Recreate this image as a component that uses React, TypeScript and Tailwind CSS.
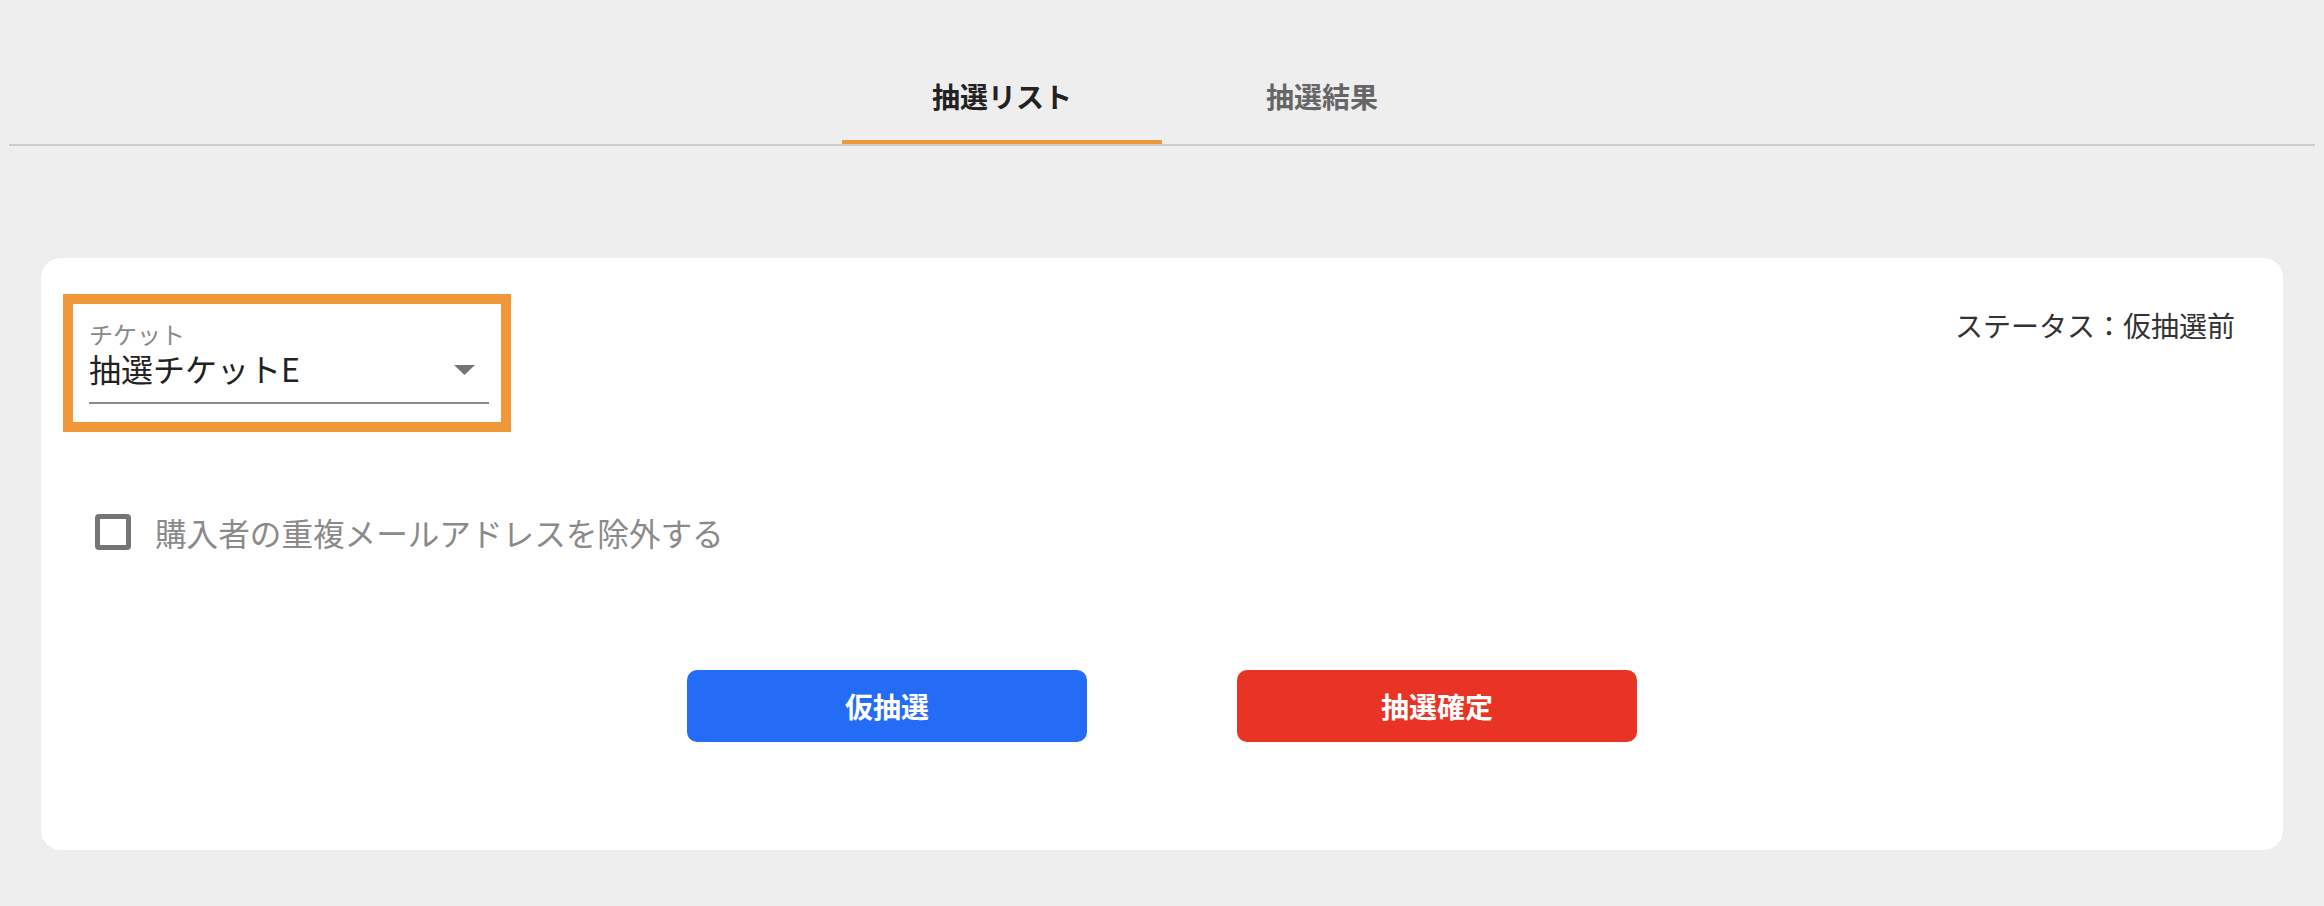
import { useState } from 'react';

const tabs = ['抽選リスト', '抽選結果'];

export default function App() {
  const [activeTab, setActiveTab] = useState(0);
  const [excludeDuplicates, setExcludeDuplicates] = useState(false);

  return (
    <div className="min-h-[906px] bg-[#eeeeee] pt-[48px] font-['Noto_Sans_CJK_JP','Noto_Sans',sans-serif]">
      {/* Tabs */}
      <div className="mx-[9px] flex justify-center border-b-2 border-[#cccccc]">
        {tabs.map((tab, idx) => (
          <button
            key={tab}
            onClick={() => setActiveTab(idx)}
            className={`relative flex h-[96px] w-[320px] items-center justify-center text-[28px] font-bold leading-[40px] ${
              activeTab === idx ? 'text-[#222222]' : 'text-[#666666]'
            }`}
          >
            {tab}
            {activeTab === idx && (
              <span className="absolute bottom-0 left-0 right-0 h-[4px] bg-[#f0973a]" />
            )}
          </button>
        ))}
      </div>

      {/* Card */}
      <div className="mx-[41px] mt-[112px] h-[592px] rounded-[20px] bg-white px-[22px] pt-[36px]">
        <div className="flex items-start justify-between">
          {/* Ticket select */}
          <div className="h-[138px] w-[448px] border-[10px] border-[#f0973a] pl-[16px] pr-[12px] pt-[17px]">
            <div className="text-[24px] leading-[26px] text-[#8a8a8a]">チケット</div>
            <div className="mt-[4px] flex items-center justify-between">
              <span className="text-[32px] leading-[34px] text-[#222222]">抽選チケットE</span>
              <svg width="21" height="10" viewBox="0 0 21 10" className="mr-[14px] mt-[4px]">
                <path d="M0 0 L21 0 L10.5 10 Z" fill="#757575" />
              </svg>
            </div>
            <div className="mt-[17px] h-[2px] bg-[#8c8c8c]" />
          </div>

          {/* Status */}
          <div className="mr-[26px] mt-[11px] text-[28px] leading-[40px] text-[#333333]">
            ステータス：仮抽選前
          </div>
        </div>

        {/* Checkbox */}
        <label className="ml-[32px] mt-[80px] flex h-[40px] cursor-pointer items-center gap-[24px]">
          <span
            onClick={() => setExcludeDuplicates(!excludeDuplicates)}
            className={`h-[36px] w-[36px] rounded-[4px] border-[5px] border-[#757575] ${
              excludeDuplicates ? 'bg-[#757575]' : 'bg-white'
            }`}
          />
          <span className="text-[31.6px] leading-[40px] text-[#8a8a8a]">
            購入者の重複メールアドレスを除外する
          </span>
        </label>

        {/* Actions */}
        <div className="mt-[118px] flex justify-center gap-[150px]">
          <button className="flex h-[72px] w-[400px] items-center justify-center rounded-[10px] bg-[#246bf6] text-[28px] font-bold text-white">
            仮抽選
          </button>
          <button className="flex h-[72px] w-[400px] items-center justify-center rounded-[10px] bg-[#e93324] text-[28px] font-bold text-white">
            抽選確定
          </button>
        </div>
      </div>
    </div>
  );
}
